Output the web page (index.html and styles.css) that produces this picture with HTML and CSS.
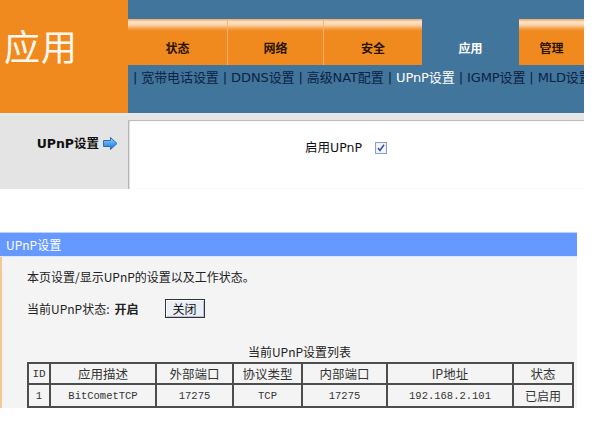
FILE: index.html
```html
<!DOCTYPE html>
<html lang="zh">
<head>
<meta charset="utf-8">
<title>UPnP设置</title>
<link rel="stylesheet" href="styles.css">
</head>
<body>
<div class="viewport">
  <header class="header">
    <div class="brand">应用</div>
    <div class="nav">
      <div class="tabs">
        <div class="tab">状态</div>
        <div class="tab">网络</div>
        <div class="tab">安全</div>
        <div class="tab active">应用</div>
        <div class="tab">管理</div>
      </div>
      <div class="subnav">| 宽带电话设置 | DDNS设置 | 高级NAT配置 | <span class="cur">UPnP设置</span> | IGMP设置 | MLD设置</div>
    </div>
  </header>

  <section class="strip">
    <div class="side">
      <span class="side-label">UPnP设置</span>
      <svg class="arrow" width="15" height="13" viewBox="0 0 15 13">
        <defs>
          <linearGradient id="ag" x1="0" y1="0" x2="0" y2="1">
            <stop offset="0" stop-color="#9fd4ff"/>
            <stop offset="0.5" stop-color="#4aa3f0"/>
            <stop offset="1" stop-color="#1f6fc8"/>
          </linearGradient>
        </defs>
        <polygon points="0.5,3.5 7.5,3.5 7.5,0.5 14,6.5 7.5,12.5 7.5,9.5 0.5,9.5" fill="url(#ag)" stroke="#2b6cb8" stroke-width="1"/>
      </svg>
    </div>
    <div class="main">
      <div class="content">
        <label class="enable">启用UPnP
          <svg class="check" width="12" height="12" viewBox="0 0 12 12">
            <rect x="0.5" y="0.5" width="11" height="11" fill="#e6ebf5" stroke="#8c9fbf"/>
            <rect x="1.5" y="1.5" width="9" height="9" fill="#f4f6fb"/>
            <path d="M3 6 L5 8.5 L9 2.8" fill="none" stroke="#3d4fa8" stroke-width="1.6"/>
          </svg>
        </label>
      </div>
    </div>
  </section>

  <section class="panel">
    <div class="panel-title">UPnP设置</div>
    <div class="panel-body">
      <p class="desc">本页设置/显示UPnP的设置以及工作状态。</p>
      <div class="status">当前UPnP状态: <b class="on">开启</b> <button class="btn" type="button">关闭</button></div>
      <div class="caption">当前UPnP设置列表</div>
      <table class="list">
        <colgroup>
          <col class="c1"><col class="c2"><col class="c3"><col class="c4"><col class="c5"><col class="c6"><col class="c7">
        </colgroup>
        <tr class="head"><td>ID</td><td>应用描述</td><td>外部端口</td><td>协议类型</td><td>内部端口</td><td>IP地址</td><td>状态</td></tr>
        <tr class="row"><td class="mono">1</td><td class="mono">BitCometTCP</td><td class="mono">17275</td><td class="mono">TCP</td><td class="mono">17275</td><td class="mono">192.168.2.101</td><td>已启用</td></tr>
        <tr class="row"><td></td><td></td><td></td><td></td><td></td><td></td><td></td></tr>
      </table>
    </div>
  </section>
</div>
</body>
</html>
```

FILE: styles.css
```css
* { box-sizing: border-box; }
html, body { margin: 0; padding: 0; background: #fff; }
body {
  width: 600px;
  font-family: "Noto Sans CJK SC", "DejaVu Sans", sans-serif;
  font-size: 12px;
  color: #222;
}
.viewport { height: 408px; overflow: hidden; }

/* header */
.header { display: flex; height: 113px; width: 584px; }
.brand {
  width: 128px;
  background: #f08a1e;
  color: #fff8ee;
  font-family: "Noto Sans CJK SC", serif;
  font-size: 36px;
  line-height: 36px;
  padding: 27px 0 0 4px;
  letter-spacing: 1px;
}
.nav {
  flex: 1;
  background: #42759b;
  padding-top: 19px;
  overflow: hidden;
}
.tabs {
  display: grid;
  grid-template-columns: 99px 96px 99px 97px 1fr;
  height: 46px;
}
.tab {
  background: linear-gradient(#f5a35a 0, #fde7cf 3px, #fbd2a6 6px, #f39a3e 10px, #f08a1e 12px);
  border-left: 1px solid #f7b278;
  text-align: center;
  padding-top: 22px;
  line-height: 14px;
  font-weight: bold;
  font-size: 12px;
  color: #2b1400;
}
.tab:first-child { border-left: 0; }
.tab.active { background: none; border-left: 0; color: #fff; }
.tab.active + .tab { border-left: 0; }
.subnav {
  padding: 6px 0 0 5px;
  line-height: 14px;
  white-space: nowrap;
  font-family: "DejaVu Sans", "Noto Sans CJK SC", sans-serif;
  font-size: 13px;
  letter-spacing: -0.1px;
  color: #0b2244;
}
.subnav .cur { color: #fff; }

/* strip */
.strip { display: flex; width: 584px; height: 76px; }
.side {
  width: 128px;
  background: #e4e4e4;
  border-top: 2px solid #ececec;
  display: flex;
  align-items: flex-start;
  justify-content: flex-end;
  padding: 21px 10px 0 0;
  gap: 4px;
}
.side-label {
  font-weight: bold;
  font-size: 12.5px;
  line-height: 16px;
  color: #111;
  font-family: "DejaVu Sans", "Noto Sans CJK SC", sans-serif;
}
.arrow { margin-top: 1px; }
.main {
  flex: 1;
  background: #e6e6e6;
  padding-top: 7px;
  display: flex;
}
.content {
  flex: 1;
  background: #fff;
  border-top: 1px solid #bdbdbd;
  box-shadow: inset 2px 0 2px -1px #9a9a9a;
  display: flex;
  justify-content: flex-start;
  padding: 19px 0 0 177px;
}
.enable {
  display: flex;
  align-items: center;
  gap: 13px;
  line-height: 16px;
  font-size: 12.5px;
  font-family: "DejaVu Sans", "Noto Sans CJK SC", sans-serif;
  color: #111;
  height: 16px;
}
.check { display: block; }

/* panel */
.panel { margin-top: 43px; width: 577px; }
.panel-title {
  height: 25px;
  background: #6699ff;
  border-top: 1px solid #b9d2ff;
  border-bottom: 1px solid #d8e6ff;
  color: #fff;
  line-height: 23px;
  padding-left: 6px;
  font-size: 12px;
}
.panel-body {
  background: #f4f4f4;
  border-left: 2px solid #f3c796;
  padding: 12px 0 0 25px;
  height: 200px;
}
.desc { margin: 0; line-height: 16px; height: 16px; }
.status {
  margin-top: 13px;
  height: 20px;
  display: flex;
  align-items: center;
}
.on { margin-left: 5px; font-weight: bold; }
.btn {
  margin-left: 26px;
  width: 40px;
  height: 19px;
  padding: 0;
  font-family: inherit;
  font-size: 12px;
  line-height: 15px;
  color: #111;
  background: #e9eef7;
  border: 1px solid #333;
  box-shadow: inset 1px 1px 0 #fff, inset -1px -1px 0 #b8c2d4;
}
.caption {
  margin-top: 26px;
  width: 545px;
  text-align: center;
  line-height: 16px;
  height: 16px;
}
.list {
  margin-top: 2px;
  width: 545px;
  border-collapse: collapse;
  table-layout: fixed;
  border: 2px solid #4d4d4d;
}
.list td {
  border: 2px solid #4d4d4d;
  text-align: center;
  padding: 0;
  color: #333;
  white-space: nowrap;
  overflow: hidden;
}
.list .c1 { width: 22px; }
.list .c2 { width: 106px; }
.list .c3 { width: 77px; }
.list .c4 { width: 69px; }
.list .c5 { width: 85px; }
.list .c6 { width: 126px; }
.list .c7 { width: 60px; }
.list .head td { height: 20px; font-size: 12.5px; }
.list .head td:first-child { font-family: "Liberation Mono", monospace; font-size: 11px; }
.list .row td { height: 23px; }
.list .mono { font-family: "Liberation Mono", monospace; font-size: 10.5px; }
```
